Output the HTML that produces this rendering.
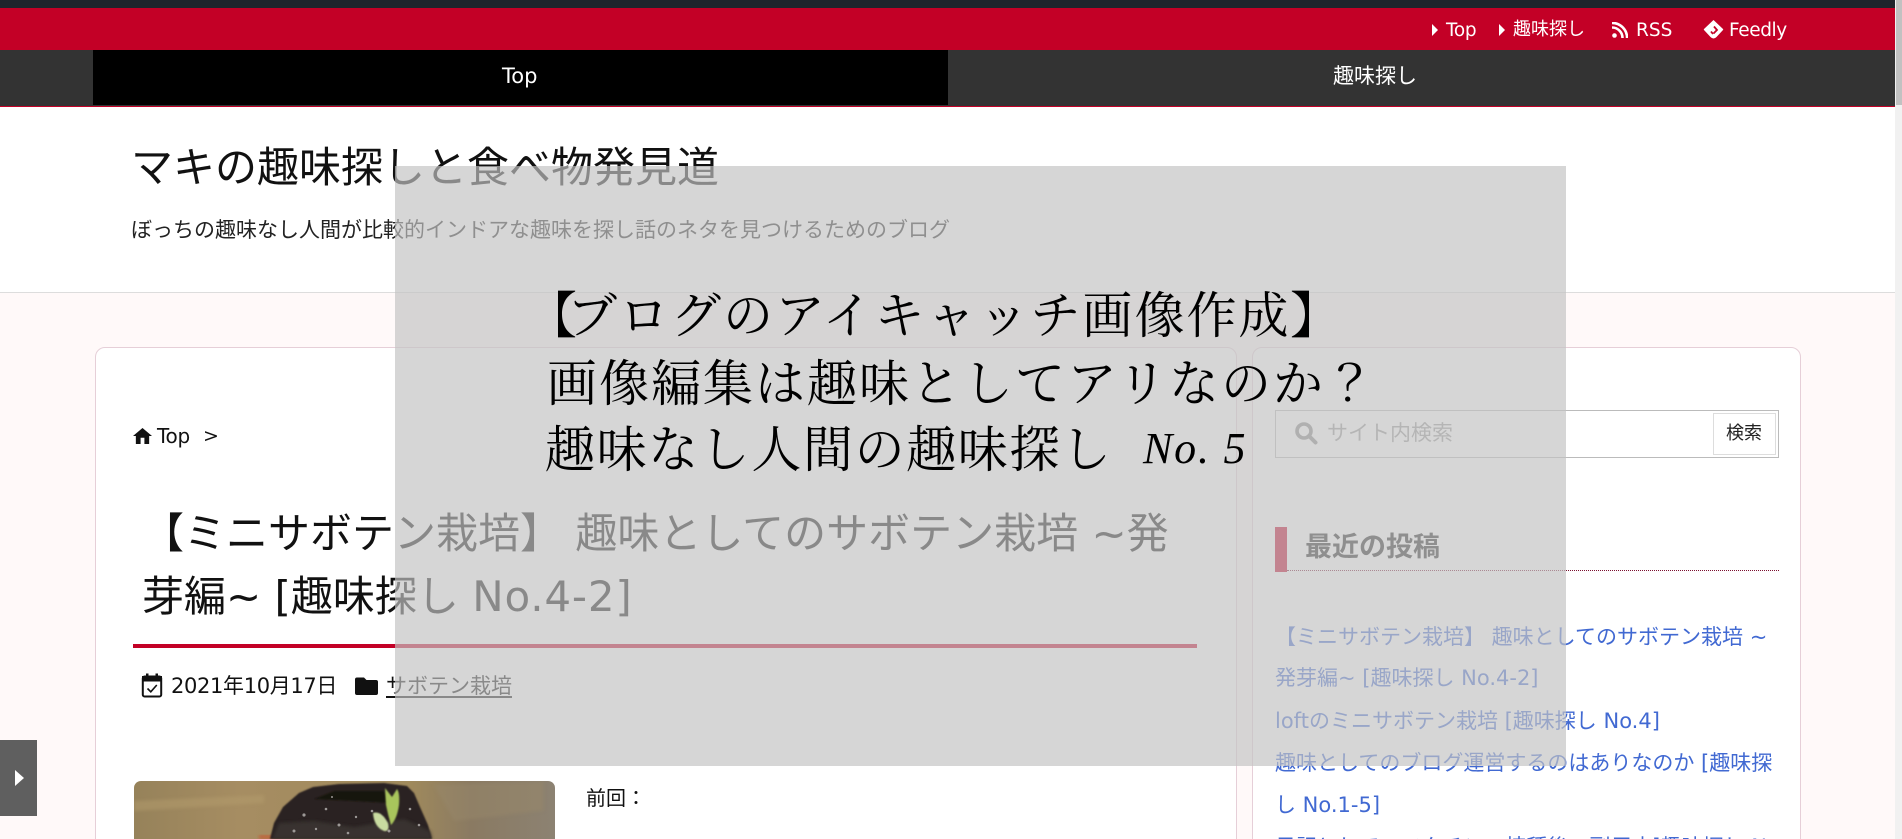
<!DOCTYPE html>
<html lang="ja"><head><meta charset="utf-8"><title>マキの趣味探しと食べ物発見道</title>
<style>
html,body{margin:0;padding:0;width:1902px;height:839px;overflow:hidden;background:#fff;}
body{position:relative;font-family:"DejaVu Sans","Noto Sans CJK JP",sans-serif;color:#111;}
.b{position:absolute;box-sizing:border-box;}
.t{position:absolute;white-space:nowrap;line-height:1;}
.s{font-family:"Noto Serif CJK SC",serif;font-size:50px;color:#000;}
svg{position:absolute;display:block;}
a{color:inherit;}
</style></head><body>
<div class="b" style="left:0;top:0;width:1895px;height:8px;background:#1f242c"></div>
<div class="b" style="left:0;top:8px;width:1895px;height:42px;background:#c30026"></div>
<div class="b" style="left:0;top:50px;width:1895px;height:57px;background:#333;border-bottom:1px solid #c30026"></div>
<div class="b" style="left:93px;top:50px;width:855px;height:55px;background:#000"></div>

<svg style="left:1431px;top:24px" width="8" height="12" viewBox="0 0 8 12"><path d="M1 0L7 6L1 12Z" fill="#fff"/></svg>
<div class="t" style="left:1446px;top:22px;font-size:18.5px;color:#fff;letter-spacing:-.3px">Top</div>
<svg style="left:1498px;top:24px" width="8" height="12" viewBox="0 0 8 12"><path d="M1 0L7 6L1 12Z" fill="#fff"/></svg>
<div class="t" style="left:1513px;top:21px;font-size:18px;color:#fff">趣味探し</div>
<svg style="left:1612px;top:22px" width="16" height="16" viewBox="0 0 16 16"><circle cx="2.5" cy="13.5" r="2.3" fill="#fff"/><path d="M0 5.5A10.500 10.500 0 0 1 10.500 16M0 .9A15.100 15.100 0 0 1 15.100 16" fill="none" stroke="#fff" stroke-width="2.600"/></svg>
<div class="t" style="left:1636px;top:22px;font-size:18.5px;color:#fff">RSS</div>
<svg style="left:1703px;top:19px" width="21" height="21" viewBox="0 0 21 20"><path d="M10.500 0.500L20 9.500Q20.500 10 20 10.500L13.500 17.500Q12 19 10.500 19Q9 19 7.500 17.500L1 10.500Q.5 10 1 9.500Z" fill="#fff"/><path d="M11 7L14 10.500L10.500 14M8 12L10 14.500M7.500 15" fill="none" stroke="#c30026" stroke-width="1.800"/></svg>
<div class="t" style="left:1729px;top:22px;font-size:18.5px;color:#fff;letter-spacing:-.4px">Feedly</div>

<div class="t" style="left:502px;top:66px;font-size:21px;color:#fff">Top</div>
<div class="t" style="left:1333px;top:66px;font-size:21px;color:#fff">趣味探し</div>

<div class="b" style="left:0;top:107px;width:1895px;height:185px;background:#fff"></div>
<div class="t" style="left:131px;top:147px;font-size:42px;color:#111">マキの趣味探しと食べ物発見道</div>
<div class="t" style="left:131px;top:220px;font-size:21px;color:#222">ぼっちの趣味なし人間が比較的インドアな趣味を探し話のネタを見つけるためのブログ</div>

<div class="b" style="left:0;top:292px;width:1895px;height:547px;background:#fff9f9;border-top:1px solid #ddd"></div>

<div class="b" style="left:95px;top:347px;width:1142px;height:520px;background:#fff;border:1px solid #e6cfd8;border-radius:10px"></div>
<div class="b" style="left:1252px;top:347px;width:549px;height:520px;background:#fff;border:1px solid #e6cfd8;border-radius:10px"></div>

<svg style="left:133px;top:428px" width="19" height="16" viewBox="2 3 20 18" preserveAspectRatio="none"><path d="M10 21v-7h4v7h5v-9h3L12 3 2 12h3v9z" fill="#111"/></svg>
<div class="t" style="left:157px;top:426px;font-size:20px;letter-spacing:-.3px">Top</div>
<div class="t" style="left:203px;top:427px;font-size:19px">&gt;</div>

<div class="t" style="left:142px;top:513px;font-size:42px;color:#111">【ミニサボテン栽培】 趣味としてのサボテン栽培 ~発</div>
<div class="t" style="left:142px;top:576px;font-size:42px;color:#111">芽編~ [趣味探し <span style="letter-spacing:.8px">No.4-2]</span></div>
<div class="b" style="left:133px;top:644px;width:1064px;height:4px;background:#c30026"></div>

<svg style="left:139px;top:671px" width="26" height="30" viewBox="0 0 26 30"><rect x="3.800" y="5.500" width="18.400" height="20" rx="1.800" fill="none" stroke="#111" stroke-width="2"/><rect x="3" y="5" width="20" height="5.500" fill="#111"/><rect x="7" y="2.500" width="2.500" height="5" fill="#111"/><rect x="16.500" y="2.500" width="2.500" height="5" fill="#111"/><path d="M8.500 17.500L11.800 20.800L17.800 14" fill="none" stroke="#111" stroke-width="1.600"/></svg>
<div class="t" style="left:171px;top:676px;font-size:21px;letter-spacing:-.35px">2021年10月17日</div>
<svg style="left:354px;top:675px" width="25" height="22" viewBox="0 0 25 22"><path d="M3 2.500H10L12.500 5H22Q24 5 24 7V18Q24 20 22 20H3Q1 20 1 18V4.500Q1 2.500 3 2.500Z" fill="#111"/></svg>
<div class="t" style="left:386px;top:676px;font-size:21px;text-decoration:underline;text-underline-offset:3px">サボテン栽培</div>

<svg style="left:134px;top:781px;border-radius:7px 7px 0 0" width="421" height="58" viewBox="0 0 421 58">
<defs><linearGradient id="w" x1="0" y1="0" x2="1" y2="0"><stop offset="0" stop-color="#96825a"/><stop offset=".25" stop-color="#a68d62"/><stop offset=".65" stop-color="#a08a5c"/><stop offset=".8" stop-color="#8a7a62"/><stop offset="1" stop-color="#8c8272"/></linearGradient><filter id="bl"><feGaussianBlur stdDeviation="1.500"/></filter><filter id="bl2"><feGaussianBlur stdDeviation=".7"/></filter></defs>
<rect width="421" height="58" fill="url(#w)"/>
<path d="M0 20L130 14V22L0 30Z" fill="#b49c6d" opacity=".5" filter="url(#bl)"/>
<path d="M300 4L410 0V30L320 40Z" fill="#97876a" opacity=".5" filter="url(#bl)"/>
<path d="M125 58H145V54H125Z" fill="#c0633a" filter="url(#bl)"/>
<path d="M136 58L140 42L149 26L165 12L179 6L205 3L250 2L273 5L280 12L286 26L294 44L298 58Z" fill="#2b2320" filter="url(#bl2)"/>
<path d="M138 58L145 42L180 40L220 46L270 38L296 50L298 58Z" fill="#3a3431" opacity=".9" filter="url(#bl)"/>
<path d="M180 18L200 10L250 10L255 22L220 20Z" fill="#181210" filter="url(#bl2)"/>
<g fill="#9c9896"><circle cx="170" cy="34" r="1.600"/><circle cx="192" cy="28" r="1.300"/><circle cx="205" cy="44" r="1.500"/><circle cx="238" cy="30" r="1.300"/><circle cx="255" cy="50" r="1.500"/><circle cx="276" cy="28" r="1.300"/><circle cx="160" cy="50" r="1.500"/><circle cx="222" cy="36" r="1.200"/><circle cx="182" cy="48" r="1.200"/><circle cx="214" cy="52" r="1.300"/><circle cx="285" cy="44" r="1.300"/><circle cx="198" cy="16" r="1"/></g>
<path d="M251 7L258 16L263 8Q266 12 265 24Q263 38 257 44Q254 34 252 24Z" fill="#a8c55c" filter="url(#bl2)"/>
<path d="M239 32Q247 29 254 42Q256 51 250 50Q240 46 239 32Z" fill="#c8dba0" filter="url(#bl2)"/>
</svg>
<div class="t" style="left:586px;top:788px;font-size:20px">前回：</div>

<div class="b" style="left:1275px;top:410px;width:504px;height:48px;background:#fff;border:1px solid #bbb"></div>
<svg style="left:1294px;top:421px" width="24" height="24" viewBox="0 0 24 24"><circle cx="10" cy="10" r="7" fill="none" stroke="#888" stroke-width="3.600"/><path d="M15 15L21.500 21.500" stroke="#888" stroke-width="4" stroke-linecap="round"/></svg>
<div class="t" style="left:1327px;top:423px;font-size:21px;color:#9a9a9a">サイト内検索</div>
<div class="b" style="left:1713px;top:413px;width:63px;height:42px;background:#fff;border:1px solid #ddd"></div>
<div class="t" style="left:1726px;top:425px;font-size:18px;color:#222">検索</div>

<div class="b" style="left:1275px;top:527px;width:12px;height:45px;background:#c30026"></div>
<div class="b" style="left:1287px;top:570px;width:492px;height:1px;border-bottom:1px dotted #7a1030"></div>
<div class="t" style="left:1305px;top:534px;font-size:27px;font-weight:bold;color:#222">最近の投稿</div>

<div style="position:absolute;left:0;top:0;color:#4169d2;font-size:21px">
<div class="t" style="left:1275px;top:627px"><a>【ミニサボテン栽培】 趣味としてのサボテン栽培 ~</a></div>
<div class="t" style="left:1275px;top:668px"><a>発芽編~ [趣味探し No.4-2]</a></div>
<div class="t" style="left:1275px;top:711px"><a>loftのミニサボテン栽培 [趣味探し No.4]</a></div>
<div class="t" style="left:1275px;top:753px"><a>趣味としてのブログ運営するのはありなのか [趣味探</a></div>
<div class="t" style="left:1275px;top:795px"><a>し No.1-5]</a></div>
<div class="t" style="left:1275px;top:837px"><a>日記としてのワクチン　接種後、副反応[趣味探し No</a></div>
</div>

<div class="b" style="left:0;top:740px;width:37px;height:76px;background:#5f5f5f"></div>
<svg style="left:14px;top:770px" width="12" height="16" viewBox="0 0 12 16"><path d="M1 0L10 8L1 16Z" fill="#fff"/></svg>

<div class="b" style="left:395px;top:166px;width:1171px;height:600px;background:rgba(195,195,195,.68)"></div>
<div class="t s" style="left:527px;top:287px">【</div>
<div class="t s" style="left:567px;top:287px;letter-spacing:2px">ブログのアイキャッチ画像作成</div>
<div class="t s" style="left:1290px;top:287px">】</div>
<div class="t s" style="left:547px;top:355px;letter-spacing:2px">画像編集は趣味としてアリなのか？</div>
<div class="t s" style="left:545px;top:421px;letter-spacing:1.600px">趣味なし人間の趣味探し</div>
<div class="t" style="left:1143px;top:427px;font-size:44px;letter-spacing:1.800px;color:#000;font-style:italic;font-family:'Liberation Serif',serif">No. 5</div>

<div class="b" style="left:1895px;top:0;width:7px;height:839px;background:#f1f1f1"></div>
<div class="b" style="left:1896px;top:0;width:6px;height:105px;background:#c1c1c1"></div>
</body></html>
